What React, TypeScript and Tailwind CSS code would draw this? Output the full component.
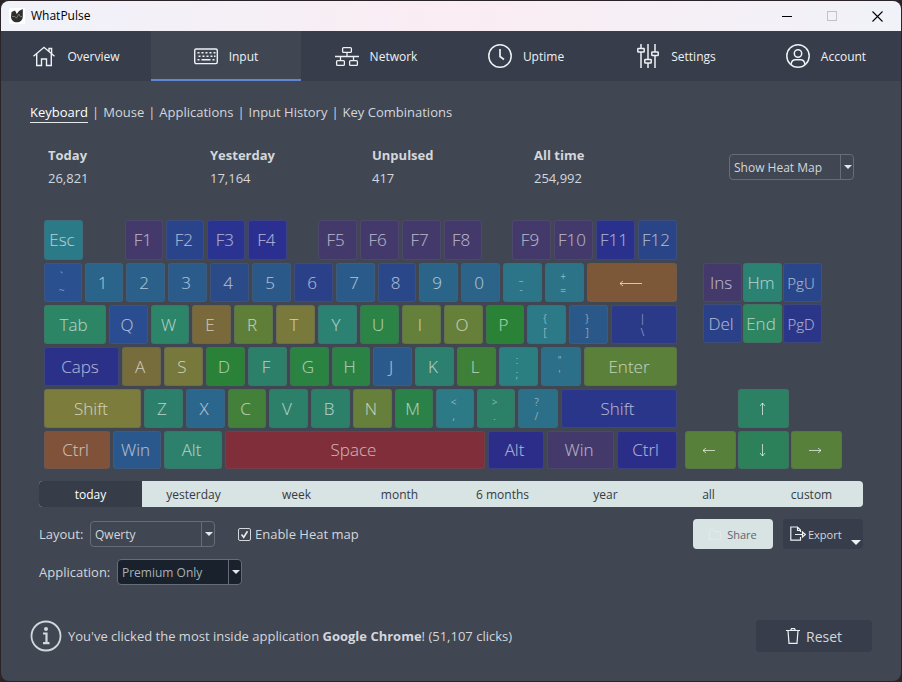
import React, { useState } from 'react';

interface KeyDef {
  label?: string;
  // Second legend, drawn under the first one
  sub?: string;
  arrow?: 'left' | 'right' | 'up' | 'down' | 'back';
  w: string;
  bg: string;
  small?: boolean;
}

const U = 'w-[39px]';
const S = 'w-[38px]';

const functionKeys: KeyDef[][] = [
  [
    { label: 'F1', w: S, bg: 'bg-[#43396b]' },
    { label: 'F2', w: S, bg: 'bg-[#2a448b]' },
    { label: 'F3', w: S, bg: 'bg-[#2a3490]' },
    { label: 'F4', w: U, bg: 'bg-[#2b2f8f]' },
  ],
  [
    { label: 'F5', w: U, bg: 'bg-[#43396b]' },
    { label: 'F6', w: U, bg: 'bg-[#43396b]' },
    { label: 'F7', w: U, bg: 'bg-[#43396b]' },
    { label: 'F8', w: S, bg: 'bg-[#43396b]' },
  ],
  [
    { label: 'F9', w: U, bg: 'bg-[#43396b]' },
    { label: 'F10', w: U, bg: 'bg-[#43396b]' },
    { label: 'F11', w: U, bg: 'bg-[#29318c]' },
    { label: 'F12', w: U, bg: 'bg-[#2a4488]' },
  ],
];

const mainRows: KeyDef[][] = [
  [
    { label: '`', sub: '~', w: S, bg: 'bg-[#2a5090]' },
    { label: '1', w: S, bg: 'bg-[#2b648a]' },
    { label: '2', w: U, bg: 'bg-[#2b608a]' },
    { label: '3', w: U, bg: 'bg-[#2a5b8a]' },
    { label: '4', w: U, bg: 'bg-[#2a4b88]' },
    { label: '5', w: U, bg: 'bg-[#2a5889]' },
    { label: '6', w: U, bg: 'bg-[#2a4089]' },
    { label: '7', w: U, bg: 'bg-[#2a5a8a]' },
    { label: '8', w: S, bg: 'bg-[#2a4889]' },
    { label: '9', w: U, bg: 'bg-[#2b6489]' },
    { label: '0', w: U, bg: 'bg-[#2b6389]' },
    { label: '_', sub: '-', w: U, bg: 'bg-[#2c7588]' },
    { label: '+', sub: '=', w: U, bg: 'bg-[#2c7388]' },
    { arrow: 'back', w: 'flex-1', bg: 'bg-[#7d5838]' },
  ],
  [
    { label: 'Tab', w: 'w-[62px]', bg: 'bg-[#2c8564]' },
    { label: 'Q', w: U, bg: 'bg-[#2a4c90]' },
    { label: 'W', w: S, bg: 'bg-[#2c8469]' },
    { label: 'E', w: U, bg: 'bg-[#7a693b]' },
    { label: 'R', w: U, bg: 'bg-[#5f7f39]' },
    { label: 'T', w: U, bg: 'bg-[#79793b]' },
    { label: 'Y', w: U, bg: 'bg-[#2c8272]' },
    { label: 'U', w: U, bg: 'bg-[#2b8345]' },
    { label: 'I', w: U, bg: 'bg-[#64803a]' },
    { label: 'O', w: U, bg: 'bg-[#66803a]' },
    { label: 'P', w: S, bg: 'bg-[#2a8237]' },
    { label: '{', sub: '[', w: U, bg: 'bg-[#2c7988]' },
    { label: '}', sub: ']', w: U, bg: 'bg-[#2a5989]' },
    { label: '|', sub: '\\', w: 'flex-1', bg: 'bg-[#2a3a88]' },
  ],
  [
    { label: 'Caps', w: 'w-[75px]', bg: 'bg-[#2b3189]' },
    { label: 'A', w: U, bg: 'bg-[#776c3b]' },
    { label: 'S', w: U, bg: 'bg-[#76793b]' },
    { label: 'D', w: U, bg: 'bg-[#2a8239]' },
    { label: 'F', w: U, bg: 'bg-[#2c8069]' },
    { label: 'G', w: U, bg: 'bg-[#2a8340]' },
    { label: 'H', w: S, bg: 'bg-[#2a8344]' },
    { label: 'J', w: U, bg: 'bg-[#2a5a8c]' },
    { label: 'K', w: U, bg: 'bg-[#2c8070]' },
    { label: 'L', w: U, bg: 'bg-[#3f8038]' },
    { label: ':', sub: ';', w: U, bg: 'bg-[#2c7f80]' },
    { label: '"', sub: "'", w: 'w-10', bg: 'bg-[#2c6f88]' },
    { label: 'Enter', w: 'flex-1', bg: 'bg-[#5a803a]' },
  ],
  [
    { label: 'Shift', w: 'w-[97px]', bg: 'bg-[#7c7c3c]' },
    { label: 'Z', w: U, bg: 'bg-[#2c806b]' },
    { label: 'X', w: U, bg: 'bg-[#2b678c]' },
    { label: 'C', w: S, bg: 'bg-[#43803a]' },
    { label: 'V', w: U, bg: 'bg-[#2c8069]' },
    { label: 'B', w: U, bg: 'bg-[#2c806a]' },
    { label: 'N', w: U, bg: 'bg-[#66803b]' },
    { label: 'M', w: S, bg: 'bg-[#2a8248]' },
    { label: '<', sub: ',', w: S, bg: 'bg-[#2c7a86]' },
    { label: '>', sub: '.', w: S, bg: 'bg-[#2c8068]' },
    { label: '?', sub: '/', w: 'w-10', bg: 'bg-[#2c6f88]' },
    { label: 'Shift', w: 'flex-1', bg: 'bg-[#2a3689]' },
  ],
  [
    { label: 'Ctrl', w: 'w-[66px]', bg: 'bg-[#7f5239]' },
    { label: 'Win', w: 'w-[48px]', bg: 'bg-[#2a588c]' },
    { label: 'Alt', w: 'w-[58px]', bg: 'bg-[#2c806c]' },
    { label: 'Space', w: 'flex-1', bg: 'bg-[#7f2e3a]' },
    { label: 'Alt', w: 'w-[56px]', bg: 'bg-[#2b2d89]' },
    { label: 'Win', w: 'w-[67px]', bg: 'bg-[#43396b]' },
    { label: 'Ctrl', w: 'w-[60px]', bg: 'bg-[#2b2e89]' },
  ],
];

const editKeys: KeyDef[] = [
  { label: 'Ins', w: U, bg: 'bg-[#43396b]' },
  { label: 'Hm', w: U, bg: 'bg-[#2c8272]' },
  { label: 'PgU', w: U, bg: 'bg-[#2a468a]', small: true },
  { label: 'Del', w: U, bg: 'bg-[#2a4089]' },
  { label: 'End', w: U, bg: 'bg-[#2c8460]' },
  { label: 'PgD', w: U, bg: 'bg-[#2b3689]', small: true },
];

const stats = [
  { name: 'Today', value: '26,821' },
  { name: 'Yesterday', value: '17,164' },
  { name: 'Unpulsed', value: '417' },
  { name: 'All time', value: '254,992' },
];

const sections = ['Keyboard', 'Mouse', 'Applications', 'Input History', 'Key Combinations'];
const periods = ['today', 'yesterday', 'week', 'month', '6 months', 'year', 'all', 'custom'];

const arrowPaths = {
  left: 'M2 8.5h12M5 6 2 8.5 5 11',
  right: 'M2 8.5h12M11 6l3 2.5-3 2.5',
  up: 'M8.5 2v12M6 5l2.5-3L11 5',
  down: 'M8.5 2v12M6 11l2.5 3 2.5-3',
};

const KeyArrow: React.FC<{ dir: NonNullable<KeyDef['arrow']> }> = ({ dir }) =>
  dir === 'back' ? (
    <svg width="24" height="8" viewBox="0 0 24 8" fill="none" stroke="currentColor">
      <path d="M1 4.5h22M4 2 1 4.5 4 7" />
    </svg>
  ) : (
    <svg width="16" height="16" viewBox="0 0 16 16" fill="none" stroke="currentColor">
      <path d={arrowPaths[dir]} />
    </svg>
  );

const Key: React.FC<{ k: KeyDef; h?: string }> = ({ k, h = 'h-[39px]' }) => (
  <div
    className={`${k.w} ${h} ${k.bg} flex shrink-0 flex-col items-center justify-center rounded-[3px] border border-[#5a5f6b]/40 pr-[3px] font-light text-white/65`}
  >
    {k.arrow && <KeyArrow dir={k.arrow} />}
    {k.sub ? (
      <>
        <span className="text-[10px] leading-[14px]">{k.label}</span>
        <span className="text-[10px] leading-[14px]">{k.sub}</span>
      </>
    ) : (
      <span className={k.small ? 'text-[15px] leading-6' : 'text-[17px] leading-6'}>{k.label}</span>
    )}
  </div>
);

const Keyboard = () => (
  <div className="mt-8 ml-[14px] flex gap-2">
    <div className="flex w-[633px] flex-col gap-[3px]">
      <div className="flex justify-between">
        <Key k={{ label: 'Esc', w: U, bg: 'bg-[#2a7b87]' }} h="h-10" />
        <div className="ml-3 flex gap-[3px]">
          {functionKeys[0].map((k) => (
            <Key key={k.label} k={k} h="h-10" />
          ))}
        </div>
        {functionKeys.slice(1).map((group) => (
          <div key={group[0].label} className="flex gap-[3px]">
            {group.map((k) => (
              <Key key={k.label} k={k} h="h-10" />
            ))}
          </div>
        ))}
      </div>
      {mainRows.map((row, r) => (
        <div key={r} className="flex gap-[3px]">
          {row.map((k, i) => (
            <Key key={i} k={k} h={r === 4 ? 'h-[38px]' : undefined} />
          ))}
        </div>
      ))}
    </div>
    {/* Edit block and arrows */}
    <div className="flex flex-col justify-between pt-[43px]">
      <div className="ml-[18px] grid w-max grid-cols-3 gap-x-px gap-y-0.5">
        {editKeys.map((k) => (
          <Key key={k.label} k={k} />
        ))}
      </div>
      <div className="flex flex-col items-center gap-[3px]">
        <Key k={{ arrow: 'up', w: 'w-[51px]', bg: 'bg-[#2c8063]' }} />
        <div className="flex gap-0.5">
          <Key k={{ arrow: 'left', w: 'w-[51px]', bg: 'bg-[#57803a]' }} h="h-[38px]" />
          <Key k={{ arrow: 'down', w: 'w-[51px]', bg: 'bg-[#2c815b]' }} h="h-[38px]" />
          <Key k={{ arrow: 'right', w: 'w-[51px]', bg: 'bg-[#57803a]' }} h="h-[38px]" />
        </div>
      </div>
    </div>
  </div>
);

interface DropdownProps {
  id: string;
  label?: string;
  value: string;
  dark?: boolean;
}

const Dropdown: React.FC<DropdownProps> = ({ id, label, value, dark }) => (
  <div className="relative h-[26px] w-[125px]">
    <select
      id={id}
      aria-label={label}
      className={`h-full w-full appearance-none rounded border border-[#666c78] pt-0.5 pl-1 text-xs ${
        dark ? 'bg-[#19222c] text-[#a9b0b8]' : 'bg-transparent text-[#d3d7dc]'
      }`}
    >
      <option>{value}</option>
    </select>
    <span className="pointer-events-none absolute inset-y-0 right-0 flex w-[14px] items-center justify-center border-l border-[#666c78]">
      <svg width="8" height="4" viewBox="0 0 8 4" fill="#e3e7ec">
        <path d="M0 0h8L4 4z" />
      </svg>
    </span>
  </div>
);

const HomeIcon = () => (
  <svg width="24" height="24" viewBox="0 0 24 24" fill="none" stroke="currentColor" strokeWidth="1.4">
    <path d="M1.5 12.3 12 3.3l10.500 9M4.700 9.800V21.500H9.500V15h5v6.500h4.800V9.800M17 7.200V4.500h2.600v5" />
  </svg>
);

const KeyboardIcon = () => (
  <svg width="24" height="24" viewBox="0 0 24 24" fill="none" stroke="currentColor" strokeWidth="1.4">
    <rect x="0.7" y="5" width="22.6" height="14.6" rx="1.5" />
    <path
      d="M3.500 8.800h2m2 0h2m2 0h2m2 0h2m2 0h2M4.500 12.300h2m2 0h2m2 0h2m2 0h2m1.500 0h1.500M3.500 15.800h2m2 0h9m2 0h2"
      strokeWidth="1.6"
    />
  </svg>
);

const NetworkIcon = () => (
  <svg width="24" height="24" viewBox="0 0 24 24" fill="none" stroke="currentColor" strokeWidth="1.3">
    <rect x="7.6" y="3.6" width="8.8" height="4.8" rx="1" />
    <rect x="1.6" y="16.6" width="7.8" height="4.8" rx="1" />
    <rect x="14.6" y="16.6" width="7.8" height="4.8" rx="1" />
    <path d="M12 8.400v4.100M0 12.500h24M5.500 12.500v4.100M18.500 12.500v4.100" />
  </svg>
);

const ClockIcon = () => (
  <svg width="24" height="24" viewBox="0 0 24 24" fill="none" stroke="currentColor" strokeWidth="1.5">
    <circle cx="12" cy="12" r="11.2" />
    <path d="M12 5v7.500l4 3" strokeWidth="1.7" />
  </svg>
);

const SlidersIcon = () => (
  <svg width="24" height="24" viewBox="0 0 24 24" fill="none" stroke="currentColor" strokeWidth="1.5">
    <path d="M5 0v4.500M5 8v16M12 0v15.500M12 19v5M19 0v8M19 11.500V24" />
    <rect x="1.8" y="4.5" width="6.4" height="3.5" rx="0.5" />
    <rect x="8.800" y="15.5" width="6.4" height="3.5" rx="0.5" />
    <rect x="15.8" y="8" width="6.4" height="3.5" rx="0.5" />
  </svg>
);

const AccountIcon = () => (
  <svg width="24" height="24" viewBox="0 0 24 24" fill="none" stroke="currentColor" strokeWidth="1.5">
    <circle cx="12" cy="12" r="11.2" />
    <circle cx="12" cy="9.5" r="3.7" />
    <path d="M5 20.500c.5-3.500 2.500-4.700 4.500-4.700h5c2 0 4 1.200 4.500 4.700" />
  </svg>
);

const tabs = [
  { name: 'Overview', Icon: HomeIcon },
  { name: 'Input', Icon: KeyboardIcon },
  { name: 'Network', Icon: NetworkIcon },
  { name: 'Uptime', Icon: ClockIcon },
  { name: 'Settings', Icon: SlidersIcon },
  { name: 'Account', Icon: AccountIcon },
];

const TitleBar = () => (
  <header className="flex h-[30px] items-center bg-linear-to-r from-[#f0f2fa] via-[#faedf3] to-[#f1f2f9] pl-2 text-black">
    <svg width="16" height="16" viewBox="0 0 16 16">
      <rect width="16" height="16" fill="#fff" />
      <path
        d="M2.500 4 6 2.500 7.800 6 10 3l3.800-2v7.500A5.700 5.700 0 0 1 8 14.300c-3.500 0-5.800-2.300-6-5.300z"
        fill="#2e2e2e"
      />
      <path d="M3 8.500h2.500L7.500 10l2.500-4 1.200 2.500H13" fill="none" stroke="#8a8a8a" strokeWidth="0.8" />
    </svg>
    <h1 className="ml-1.5 text-xs">WhatPulse</h1>
    <div className="ml-auto flex h-full">
      <button aria-label="Minimize" className="flex w-[45px] items-center justify-center">
        <svg width="10" height="10" stroke="#000">
          <path d="M0 5.500h10" />
        </svg>
      </button>
      <button aria-label="Maximize" disabled className="flex w-[45px] items-center justify-center">
        <svg width="10" height="10" fill="none" stroke="#c6c0c8">
          <rect x="0.5" y="0.5" width="9" height="9" />
        </svg>
      </button>
      <button aria-label="Close" className="flex w-[47px] items-center justify-center">
        <svg width="11" height="11" stroke="#000" strokeWidth="1.1">
          <path d="m.5.5 10 10M10.500.5l-10 10" />
        </svg>
      </button>
    </div>
  </header>
);

const App = () => {
  const [period, setPeriod] = useState('today');
  const [heatMap, setHeatMap] = useState(true);

  return (
    <div className="min-h-screen bg-[#2a2429] p-px font-['Open_Sans',sans-serif]">
      <div className="flex min-h-[calc(100vh-2px)] flex-col overflow-hidden rounded-lg bg-[#404652] text-[13px] text-[#d3d7dc]">
        <TitleBar />
        <nav className="grid h-[50px] grid-cols-6 bg-[#373d4a] text-xs text-[#eef1f4]">
          {tabs.map(({ name, Icon }) => (
            <button
              key={name}
              className={`flex items-center justify-center gap-[11px] border-y-2 border-t-transparent ${
                name === 'Input' ? 'border-b-[#6286d6] bg-[#404753]' : 'border-b-transparent'
              }`}
            >
              <Icon />
              <span className="pt-0.5">{name}</span>
            </button>
          ))}
        </nav>

        <main className="flex-1 px-[29px] pt-[21px] pb-7">
          <div className="flex leading-5">
            {sections.map((name, i) => (
              <React.Fragment key={name}>
                {i > 0 && <span className="px-1">|</span>}
                <a href="#" className={i === 0 ? 'border-b border-[#e6e9ec] text-white' : 'border-b border-transparent'}>
                  {name}
                </a>
              </React.Fragment>
            ))}
          </div>

          <div className="mt-[22px] flex items-center justify-between pr-[18px] pl-[18px]">
            <dl className="flex leading-5">
              {stats.map((s) => (
                <div key={s.name} className="flex w-[162px] flex-col gap-[3px]">
                  <dt className="font-bold">{s.name}</dt>
                  <dd>{s.value}</dd>
                </div>
              ))}
            </dl>
            <Dropdown id="view" label="View" value="Show Heat Map" />
          </div>

          <Keyboard />

          {/* Period switch */}
          <div className="mx-[9px] mt-3 flex h-[26px] overflow-hidden rounded bg-[#d8e3e3] text-xs text-[#343b45]">
            {periods.map((p) => (
              <button
                key={p}
                onClick={() => setPeriod(p)}
                className={`flex-1 pt-0.5 ${p === period ? 'bg-[#363d49] text-white' : ''}`}
              >
                {p}
              </button>
            ))}
          </div>

          <div className="mx-[9px] mt-3 flex items-center">
            <label htmlFor="layout" className="w-[51px] pt-0.5">
              Layout:
            </label>
            <Dropdown id="layout" value="Qwerty" />
            <label className="ml-[23px] flex items-center gap-1">
              <span className="relative flex">
                <input
                  type="checkbox"
                  checked={heatMap}
                  onChange={(e) => setHeatMap(e.target.checked)}
                  className="h-[13px] w-[13px] appearance-none rounded-xs border border-[#d3d7dc]"
                />
                {heatMap && (
                  <svg
                    className="pointer-events-none absolute inset-0"
                    width="13"
                    height="13"
                    fill="none"
                    stroke="#e8ebee"
                    strokeWidth="1.6"
                  >
                    <path d="m3.500 6.500 2.200 2.800 3.800-6" />
                  </svg>
                )}
              </span>
              <span className="pt-0.5">Enable Heat map</span>
            </label>
            <button className="ml-auto flex h-[30px] w-20 items-center justify-center gap-1.5 rounded bg-[#d8e3e3] text-[11px] text-[#5d666f]">
              <svg width="12" height="12" fill="none" stroke="#e3e9eb">
                <path d="M.5 1.500h4l1 2h6v8H.5z" />
              </svg>
              <span className="pt-0.5">Share</span>
            </button>
            <button className="relative ml-2.5 flex h-[30px] w-20 items-center gap-0.5 rounded bg-[#373d4a] pl-[7px] text-[11px]">
              <svg width="16" height="16" viewBox="0 0 16 16" fill="none" stroke="#eef1f4" strokeWidth="1.2">
                <path d="M10.500 6V4L7.500 1H.8v13.200h9.700V11M7.500 1v3.500h3M5 8.500h8" />
                <path d="m12.500 6 2.800 2.500-2.800 2.500z" />
              </svg>
              <span className="pt-0.5">Export</span>
              <svg className="absolute right-0.5 bottom-1" width="10" height="5" fill="#eef1f4">
                <path d="M0 0h10L5 5z" />
              </svg>
            </button>
          </div>

          <div className="mx-[9px] mt-2.5 flex items-center">
            <label htmlFor="application" className="w-[78px] pt-0.5">
              Application:
            </label>
            <Dropdown id="application" value="Premium Only" dark />
          </div>

          <footer className="mt-[35px] flex items-center">
            <svg width="32" height="32" viewBox="0 0 32 32" fill="none" stroke="#d3d7dc">
              <circle cx="16" cy="16" r="14.5" strokeWidth="1.8" />
              <circle cx="16" cy="9" r="2" fill="#d3d7dc" stroke="none" />
              <path d="M13 13.500h3.500V23M13 23.200h6.500" strokeWidth="2.2" />
            </svg>
            <p className="ml-1.5 pt-0.5">
              You've clicked the most inside application <b>Google Chrome</b>! (51,107 clicks)
            </p>
            <button className="ml-auto flex h-8 w-[116px] items-center justify-center gap-1.5 rounded bg-[#373d4a] text-sm">
              <svg width="14" height="16" viewBox="0 0 14 16" fill="none" stroke="#eef1f4" strokeWidth="1.2">
                <path d="M0 2.500h14M4.500 2.500 5.500.600h3l1 1.900M2 2.500 3 15.400h8l1-12.900" />
              </svg>
              <span className="pt-0.5">Reset</span>
            </button>
          </footer>
        </main>
      </div>
    </div>
  );
};

export default App;
